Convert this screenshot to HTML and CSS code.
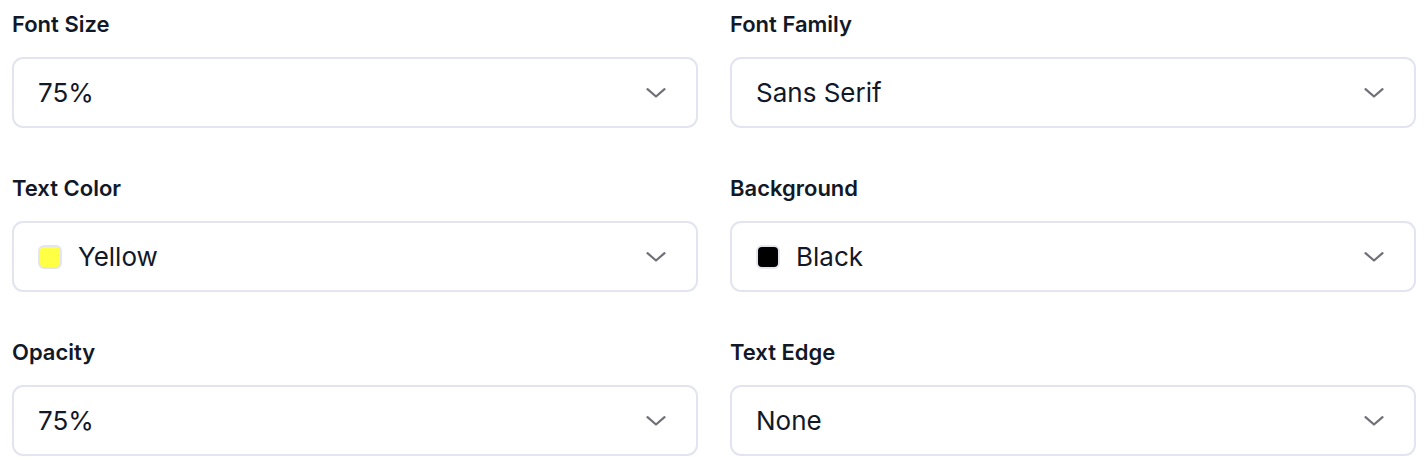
FILE: index.html
```html
<!DOCTYPE html>
<html lang="en">
<head>
<meta charset="utf-8">
<title>Caption Settings</title>
<link rel="stylesheet" href="styles.css">
</head>
<body>
<div class="settings">
  <div class="field">
    <div class="label">Font Size</div>
    <div class="select"><span class="value">75%</span><svg class="chev" viewBox="0 0 20 10" width="20" height="10"><path d="M1.5 1.2 L10 8.5 L18.5 1.2"/></svg></div>
  </div>
  <div class="field">
    <div class="label">Font Family</div>
    <div class="select"><span class="value">Sans Serif</span><svg class="chev" viewBox="0 0 20 10" width="20" height="10"><path d="M1.5 1.2 L10 8.5 L18.5 1.2"/></svg></div>
  </div>
  <div class="field">
    <div class="label">Text Color</div>
    <div class="select"><span class="swatch swatch-yellow"></span><span class="value">Yellow</span><svg class="chev" viewBox="0 0 20 10" width="20" height="10"><path d="M1.5 1.2 L10 8.5 L18.5 1.2"/></svg></div>
  </div>
  <div class="field">
    <div class="label">Background</div>
    <div class="select"><span class="swatch swatch-black"></span><span class="value">Black</span><svg class="chev" viewBox="0 0 20 10" width="20" height="10"><path d="M1.5 1.2 L10 8.5 L18.5 1.2"/></svg></div>
  </div>
  <div class="field">
    <div class="label">Opacity</div>
    <div class="select"><span class="value">75%</span><svg class="chev" viewBox="0 0 20 10" width="20" height="10"><path d="M1.5 1.2 L10 8.5 L18.5 1.2"/></svg></div>
  </div>
  <div class="field">
    <div class="label">Text Edge</div>
    <div class="select"><span class="value">None</span><svg class="chev" viewBox="0 0 20 10" width="20" height="10"><path d="M1.5 1.2 L10 8.5 L18.5 1.2"/></svg></div>
  </div>
</div>
</body>
</html>
```
FILE: styles.css
```css
html, body {
  margin: 0;
  background: #ffffff;
}
body {
  font-family: Inter, "Noto Sans", sans-serif;
  color: #111827;
  padding: 10px 12px 0 12px;
}
.settings {
  display: grid;
  grid-template-columns: 1fr 1fr;
  column-gap: 32px;
  row-gap: 46px;
}
.field {
  display: flex;
  flex-direction: column;
}
.label {
  font-size: 22px;
  line-height: 28px;
  font-weight: 600;
  margin-bottom: 19px;
}
.select {
  box-sizing: border-box;
  height: 71px;
  border: 2px solid #e2e5ef;
  border-radius: 11px;
  display: flex;
  align-items: center;
  padding: 0 30px 0 24px;
  gap: 16px;
}
.value {
  font-size: 26px;
  flex: 1;
  font-weight: 400;
}
.swatch {
  width: 24px;
  height: 24px;
  box-sizing: border-box;
  border-radius: 6px;
  border: 2px solid #e3e6ee;
  flex: none;
}
.swatch-yellow { background: #ffff44; }
.swatch-black { background: #000000; }
.chev {
  flex: none;
  fill: none;
  stroke: #6f6f78;
  stroke-width: 2.2;
  stroke-linecap: round;
  stroke-linejoin: round;
}
```
